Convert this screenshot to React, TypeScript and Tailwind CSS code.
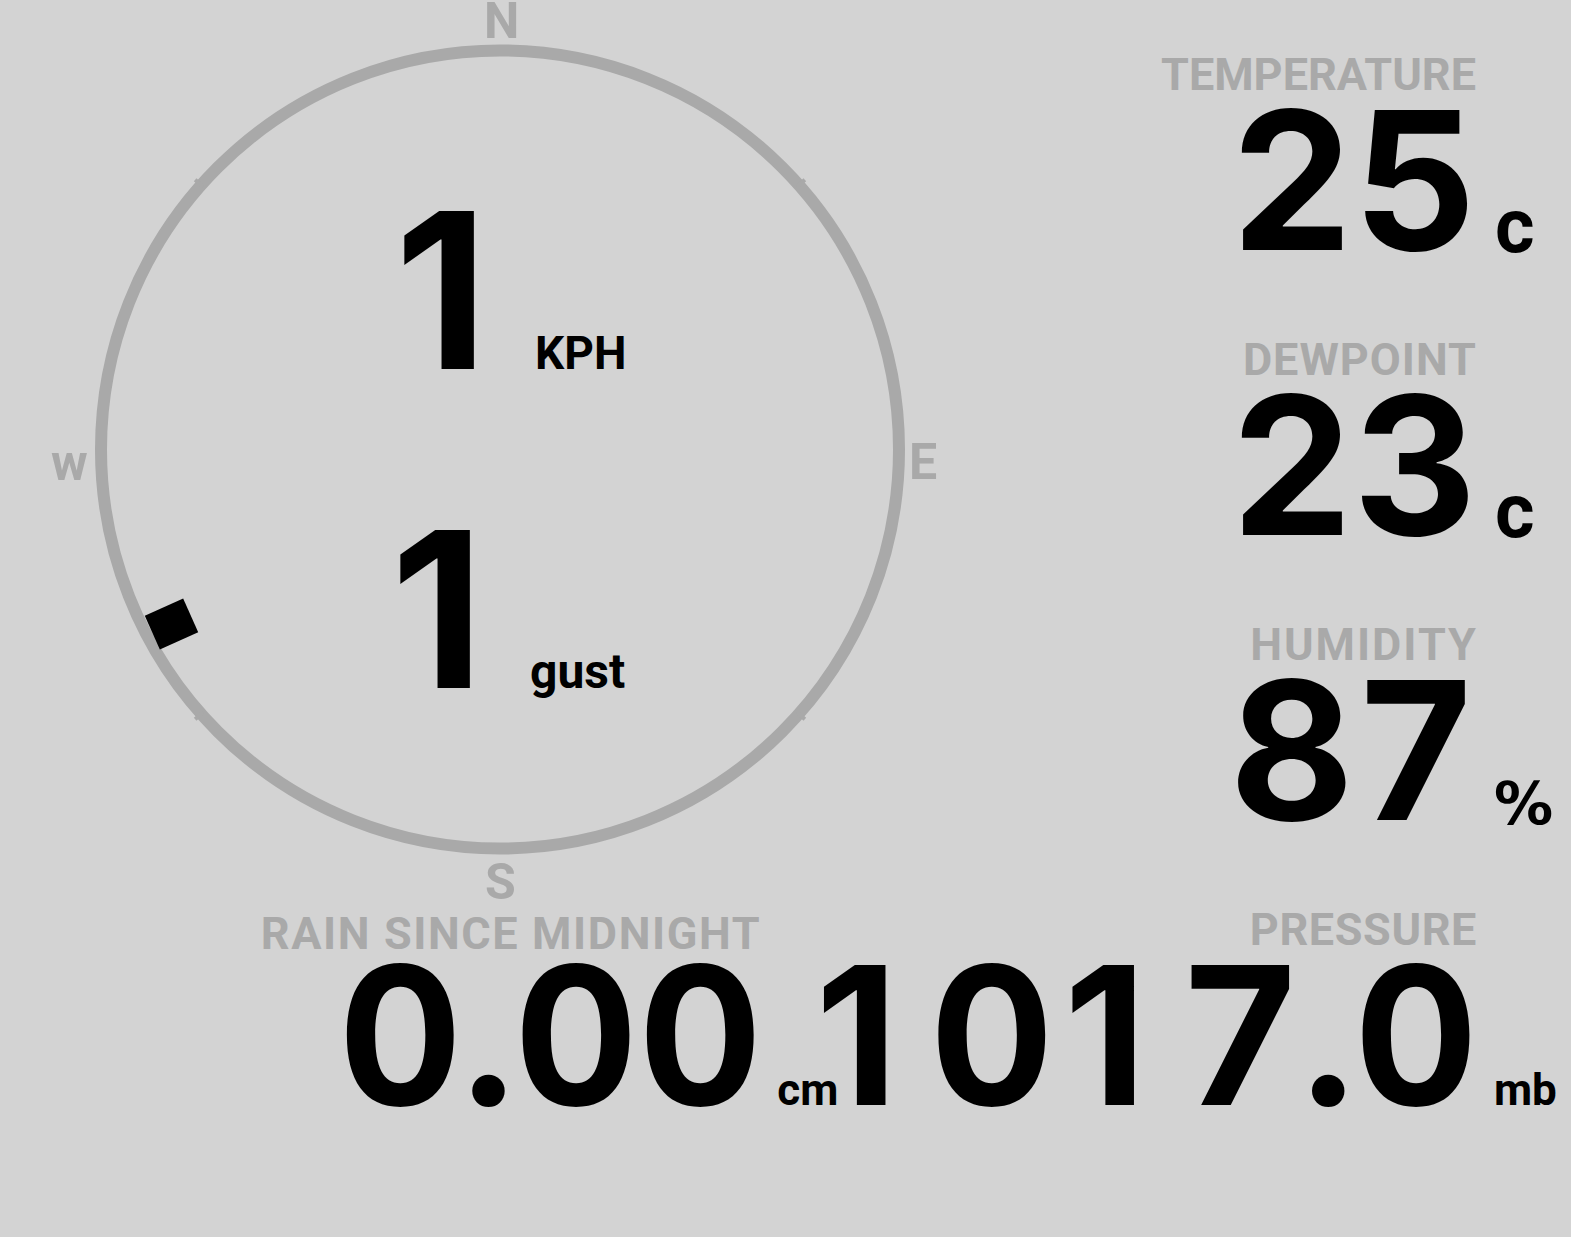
import React from "react";

function Num({ value }: { value: string }) {
  return (
    <>
      {value.split("").map((ch, i) =>
        ch === "1" ? (
          <span key={i} className="inline-block w-[0.648em] text-left pl-[10px] normal-nums">
            1
          </span>
        ) : (
          <React.Fragment key={i}>{ch}</React.Fragment>
        )
      )}
    </>
  );
}

type StatProps = {
  label: string;
  value: string;
  unit: string;
  gridClass: string;
  labelClass: string;
  unitClass: string;
};

function Stat({ label, value, unit, gridClass, labelClass, unitClass }: StatProps) {
  return (
    <div className={gridClass}>
      <div className={labelClass}>{label}</div>
      <div className="col-start-1 row-start-2 self-baseline text-right font-[Inter,sans-serif] tabular-nums text-[192px] leading-none font-bold mt-[-13px] mr-[-2px] whitespace-nowrap">
        <Num value={value} />
      </div>
      <div className={unitClass}>{unit}</div>
    </div>
  );
}

const CX = 500;
const CY = 449.5;
const R = 399;

function Compass() {
  const ticks = [48.5, 131.5, 228.5, 311.5].map((deg) => {
    const a = (deg * Math.PI) / 180;
    const sx = Math.sin(a);
    const sy = -Math.cos(a);
    return {
      x1: CX + sx * (R - 2),
      y1: CY + sy * (R - 2),
      x2: CX + sx * (R + 8),
      y2: CY + sy * (R + 8),
    };
  });
  return (
    <div className="relative w-[1000px] h-[905px] shrink-0">
      <svg width="1000" height="905" className="block">
        <circle cx={CX} cy={CY} r={R} fill="none" stroke="#a9a9a9" strokeWidth={12} />
        {ticks.map((t, i) => (
          <line key={i} x1={t.x1} y1={t.y1} x2={t.x2} y2={t.y2} stroke="#a9a9a9" strokeWidth={4} />
        ))}
        <rect
          x={-21}
          y={-18.5}
          width={42}
          height={37}
          fill="#000"
          transform="translate(171.5 624) rotate(-24)"
        />
      </svg>
      <span className="absolute left-[484px] top-[-4px] text-[50px] leading-none font-bold text-[#a9a9a9]">N</span>
      <span className="absolute left-[909px] top-[437px] text-[50px] leading-none font-bold text-[#a9a9a9]">E</span>
      <span className="absolute left-[51px] top-[438px] text-[50px] leading-none font-bold text-[#a9a9a9]">w</span>
      <span className="absolute left-[485px] top-[857px] text-[50px] leading-none font-bold text-[#a9a9a9]">S</span>
      <div className="absolute left-[378px] top-[182px] flex flex-col gap-[102px]">
        <div className="flex items-baseline">
          <span className="w-[110px] text-right font-[Inter,sans-serif] text-[217px] leading-none font-bold">1</span>
          <span className="ml-[47px] text-[46px] leading-none font-bold">KPH</span>
        </div>
        <div className="flex items-baseline">
          <span className="w-[106px] text-right font-[Inter,sans-serif] text-[217px] leading-none font-bold">1</span>
          <span className="ml-[46px] text-[48px] leading-none font-bold">gust</span>
        </div>
      </div>
    </div>
  );
}

const labelBase =
  "col-start-1 row-start-1 text-right text-[45px] leading-none font-bold text-[#a9a9a9] whitespace-nowrap";

export default function App() {
  return (
    <div className="min-h-screen w-full bg-[#d3d3d3] font-[Roboto,sans-serif] text-black overflow-hidden">
      <div className="flex h-[905px]">
        <Compass />
        <div className="flex-1 flex flex-col items-end pr-[13px] pt-[52px] gap-[61px]">
          <Stat
            label="TEMPERATURE"
            value="25"
            unit="c"
            gridClass="grid grid-cols-[auto_82px]"
            labelClass={labelBase}
            unitClass="col-start-2 row-start-2 self-baseline pl-[19px] text-[76px] leading-none font-bold translate-y-[2px]"
          />
          <Stat
            label="DEWPOINT"
            value="23"
            unit="c"
            gridClass="grid grid-cols-[auto_82px]"
            labelClass={`${labelBase} tracking-[1px] mr-[-1px]`}
            unitClass="col-start-2 row-start-2 self-baseline pl-[19px] text-[76px] leading-none font-bold translate-y-[2px]"
          />
          <Stat
            label="HUMIDITY"
            value="87"
            unit="%"
            gridClass="grid grid-cols-[auto_82px]"
            labelClass={`${labelBase} tracking-[2px] mr-[-2px]`}
            unitClass="col-start-2 row-start-2 self-baseline pl-[18px] font-['DejaVu_Sans',sans-serif] text-[59px] leading-none font-bold translate-y-[4px]"
          />
        </div>
      </div>
      <div className="flex justify-end items-end pr-[13px] mt-[2px]">
        <Stat
          label="RAIN SINCE MIDNIGHT"
          value="0.00"
          unit="cm"
          gridClass="grid grid-cols-[auto_45px]"
          labelClass={`${labelBase} tracking-[1.6px] mr-[-1px] translate-y-[4px]`}
          unitClass="col-start-2 row-start-2 self-baseline pl-[17px] text-[44px] leading-none font-bold whitespace-nowrap"
        />
        <Stat
          label="PRESSURE"
          value="1017.0"
          unit="mb"
          gridClass="grid grid-cols-[auto_82px]"
          labelClass={`${labelBase} tracking-[0.6px] mr-[-1px]`}
          unitClass="col-start-2 row-start-2 self-baseline pl-[18px] text-[44px] leading-none font-bold"
        />
      </div>
    </div>
  );
}
